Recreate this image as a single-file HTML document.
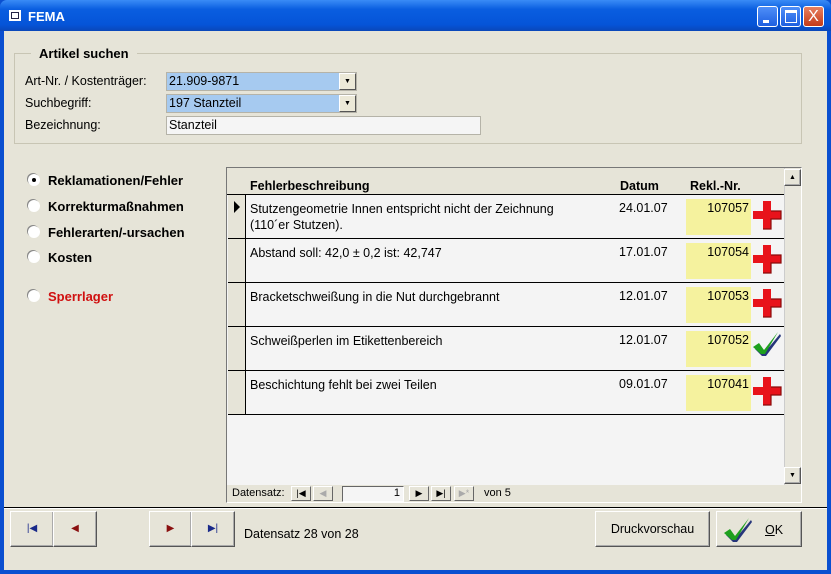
<!DOCTYPE html>
<html><head><meta charset="utf-8"><style>
*{box-sizing:border-box;margin:0;padding:0}
body{width:831px;height:574px;overflow:hidden;background:#0a4fd0;font-family:"Liberation Sans",sans-serif;font-size:12px;color:#000;position:relative}
.a{position:absolute}
#title{left:0;top:0;width:831px;height:31px;background:linear-gradient(#3a8cf6,#0a5ee0 30%,#0554d8 80%,#0a47b8);border-radius:7px 7px 0 0}
#client{left:4px;top:31px;width:823px;height:539px;background:#e6e4d8}
.tb{top:6px;width:21px;height:21px;border:1px solid #fff;border-radius:3px;background:linear-gradient(#4f8ff8,#1e5fe0)}
.lbl{font-size:12.5px}
.combo{height:19px;background:#a6caf0;border:1px solid #b5b3a8;padding:1px 0 0 2px;font-size:12.5px}
.dd{position:absolute;right:0;top:0;width:17px;height:17px;background:#ece9d8;border:1px solid;border-color:#fff #555 #555 #fff;font-size:7px;text-align:center;line-height:16px}
.radio{width:12px;height:12px;border-radius:50%;background:#fff;box-shadow:-1px -1px 0 #888}
.rt{font-weight:bold;font-size:13px}
.row{left:246px;width:538px;height:44px;border-bottom:1px solid #000}
.rs{left:228px;width:18px;height:44px;border-bottom:1px solid #000;border-right:1px solid #000;background:#e6e4d8}
.desc{position:absolute;left:4px;top:6px;font-size:12.5px;line-height:16px}
.dt{position:absolute;left:373px;top:6px;font-size:12.5px}
.yb{position:absolute;left:440px;top:4px;width:65px;height:36px;background:#f5f29e;text-align:right;padding:2px 2px 0 0;font-size:12.5px}
.btn{height:36px;border:1px solid;border-color:#fff #555 #555 #fff;background:#e6e4d8;box-shadow:inset -1px -1px 0 #aaa}
.nb{top:486px;width:20px;height:15px;border:1px solid;border-color:#fff #666 #666 #fff;background:#e6e4d8;font-size:9px;text-align:center;line-height:13px}
</style></head><body>
<div id="title" class="a">
 <div class="a" style="left:9px;top:10px;width:12px;height:11px;background:#fff;border:1px solid #fff"><div style="margin:1px;height:7px;border:1px solid #224"></div></div>
 <div class="a" style="left:28px;top:9px;color:#fff;font-weight:bold;font-size:13px">FEMA</div>
 <div class="a tb" style="left:757px"><div class="a" style="left:5px;top:13px;width:6px;height:3px;background:#fff"></div></div>
 <div class="a tb" style="left:780px"><div class="a" style="left:4px;top:3px;width:12px;height:13px;border:1px solid #fff;border-top-width:3px"></div></div>
 <div class="a tb" style="left:803px;background:linear-gradient(#e88060,#c43a18);color:#fff;font-size:16px;text-align:center;line-height:19px">X</div>
</div>
<div id="client" class="a"></div>
<div class="a" style="left:14px;top:53px;width:788px;height:91px;border:1px solid #c8c5b4"></div>
<div class="a" style="left:31px;top:46px;padding:0 8px;background:#e6e4d8;font-weight:bold;font-size:13px">Artikel suchen</div>
<div class="a lbl" style="left:25px;top:74px">Art-Nr. / Kostenträger:</div>
<div class="a lbl" style="left:25px;top:96px">Suchbegriff:</div>
<div class="a lbl" style="left:25px;top:118px">Bezeichnung:</div>
<div class="a combo" style="left:166px;top:72px;width:191px">21.909-9871<div class="dd">▼</div></div>
<div class="a combo" style="left:166px;top:94px;width:191px">197 Stanzteil<div class="dd">▼</div></div>
<div class="a combo" style="left:166px;top:116px;width:315px;background:#f5f5f5">Stanzteil</div>
<div class="a radio" style="left:28px;top:174px"><div style="margin:4px;width:4px;height:4px;background:#000;border-radius:50%"></div></div>
<div class="a rt" style="left:48px;top:173px">Reklamationen/Fehler</div>
<div class="a radio" style="left:28px;top:200px"></div><div class="a rt" style="left:48px;top:199px">Korrekturmaßnahmen</div>
<div class="a radio" style="left:28px;top:226px"></div><div class="a rt" style="left:48px;top:225px">Fehlerarten/-ursachen</div>
<div class="a radio" style="left:28px;top:251px"></div><div class="a rt" style="left:48px;top:250px">Kosten</div>
<div class="a radio" style="left:28px;top:290px"></div><div class="a rt" style="left:48px;top:289px;color:#d01010">Sperrlager</div>
<div class="a" style="left:226px;top:167px;width:576px;height:336px;border:1px solid;border-color:#777 #fff #fff #777;background:#f4f4f4"></div>
<div class="a" style="left:227px;top:168px;width:557px;height:27px;background:#e6e4d8;border-bottom:1px solid #000"></div>
<div class="a" style="left:250px;top:179px;font-weight:bold;font-size:12.5px">Fehlerbeschreibung</div>
<div class="a" style="left:620px;top:179px;font-weight:bold;font-size:12.5px">Datum</div>
<div class="a" style="left:690px;top:179px;font-weight:bold;font-size:12.5px">Rekl.-Nr.</div>
<svg width="0" height="0" style="position:absolute"><defs>
<g id="cross"><path d="M10 2h8v10h10v8H18v10h-8V20H0v-8h10z" fill="#e8131b"/><path d="M18 12h10v8H18v10h-8" fill="none" stroke="#8a0a0a" stroke-width="1.2"/></g>
<g id="chk"><path d="M3 20l5-4 5 7L28 5l1 2-15 20h-4z" fill="#26357a"/><path d="M1 18l6-4 5 7L26 3l-13 22h-4z" fill="#1ea01e"/></g>
</defs></svg>
<div class="a rs" style="top:195px"><div style="margin:6px 0 0 6px;width:0;height:0;border-left:6px solid #000;border-top:6px solid transparent;border-bottom:6px solid transparent"></div></div>
<div class="a row" style="top:195px"><div class="desc">Stutzengeometrie Innen entspricht nicht der Zeichnung<br>(110´er Stutzen).</div><div class="dt">24.01.07</div><div class="yb">107057</div><svg class="a" style="left:507px;top:4px" width="30" height="32"><use href="#cross"/></svg></div>
<div class="a rs" style="top:239px"></div>
<div class="a row" style="top:239px"><div class="desc">Abstand soll: 42,0 ± 0,2 ist: 42,747</div><div class="dt">17.01.07</div><div class="yb">107054</div><svg class="a" style="left:507px;top:4px" width="30" height="32"><use href="#cross"/></svg></div>
<div class="a rs" style="top:283px"></div>
<div class="a row" style="top:283px"><div class="desc">Bracketschweißung in die Nut durchgebrannt</div><div class="dt">12.01.07</div><div class="yb">107053</div><svg class="a" style="left:507px;top:4px" width="30" height="32"><use href="#cross"/></svg></div>
<div class="a rs" style="top:327px"></div>
<div class="a row" style="top:327px"><div class="desc">Schweißperlen im Etikettenbereich</div><div class="dt">12.01.07</div><div class="yb">107052</div><svg class="a" style="left:506px;top:2px" width="30" height="30"><use href="#chk"/></svg></div>
<div class="a rs" style="top:371px"></div>
<div class="a row" style="top:371px"><div class="desc">Beschichtung fehlt bei zwei Teilen</div><div class="dt">09.01.07</div><div class="yb">107041</div><svg class="a" style="left:507px;top:4px" width="30" height="32"><use href="#cross"/></svg></div>
<div class="a" style="left:784px;top:168px;width:17px;height:317px;background:#e8e6dc;border-left:1px solid #ccc"></div>
<div class="a btn" style="left:784px;top:169px;width:17px;height:17px;font-size:7px;text-align:center;line-height:15px">▲</div>
<div class="a btn" style="left:784px;top:467px;width:17px;height:17px;font-size:7px;text-align:center;line-height:15px">▼</div>
<div class="a" style="left:227px;top:485px;width:574px;height:17px;background:#e6e4d8"></div>
<div class="a" style="left:232px;top:487px;font-size:11px">Datensatz:</div>
<div class="a nb" style="left:291px">|◀</div><div class="a nb" style="left:313px;color:#aaa">◀</div>
<div class="a" style="left:342px;top:486px;width:62px;height:16px;background:#f5f5f5;border:1px solid;border-color:#666 #fff #fff #666;text-align:right;font-size:11px;padding-right:3px">1</div>
<div class="a nb" style="left:409px">▶</div><div class="a nb" style="left:431px">▶|</div><div class="a nb" style="left:454px;color:#aaa">▶*</div>
<div class="a" style="left:484px;top:487px;font-size:11px">von 5</div>
<div class="a" style="left:4px;top:507px;width:823px;height:2px;border-top:1px solid #000;border-bottom:1px solid #fff"></div>
<div class="a btn" style="left:10px;top:511px;width:44px;color:#1a2a8a;text-align:center;line-height:34px;font-size:10px">|◀</div>
<div class="a btn" style="left:53px;top:511px;width:44px;color:#8a1010;text-align:center;line-height:34px;font-size:10px">◀</div>
<div class="a btn" style="left:149px;top:511px;width:43px;color:#8a1010;text-align:center;line-height:34px;font-size:10px">▶</div>
<div class="a btn" style="left:191px;top:511px;width:44px;color:#1a2a8a;text-align:center;line-height:34px;font-size:10px">▶|</div>
<div class="a" style="left:244px;top:527px;font-size:12.5px">Datensatz 28 von 28</div>
<div class="a btn" style="left:595px;top:511px;width:115px;text-align:center;line-height:34px;font-size:12.5px">Druckvorschau</div>
<div class="a btn" style="left:716px;top:511px;width:86px"><svg class="a" style="left:6px;top:3px" width="30" height="30"><use href="#chk"/></svg><span class="a" style="left:48px;top:11px;font-size:12.5px"><u>O</u>K</span></div>
</body></html>
